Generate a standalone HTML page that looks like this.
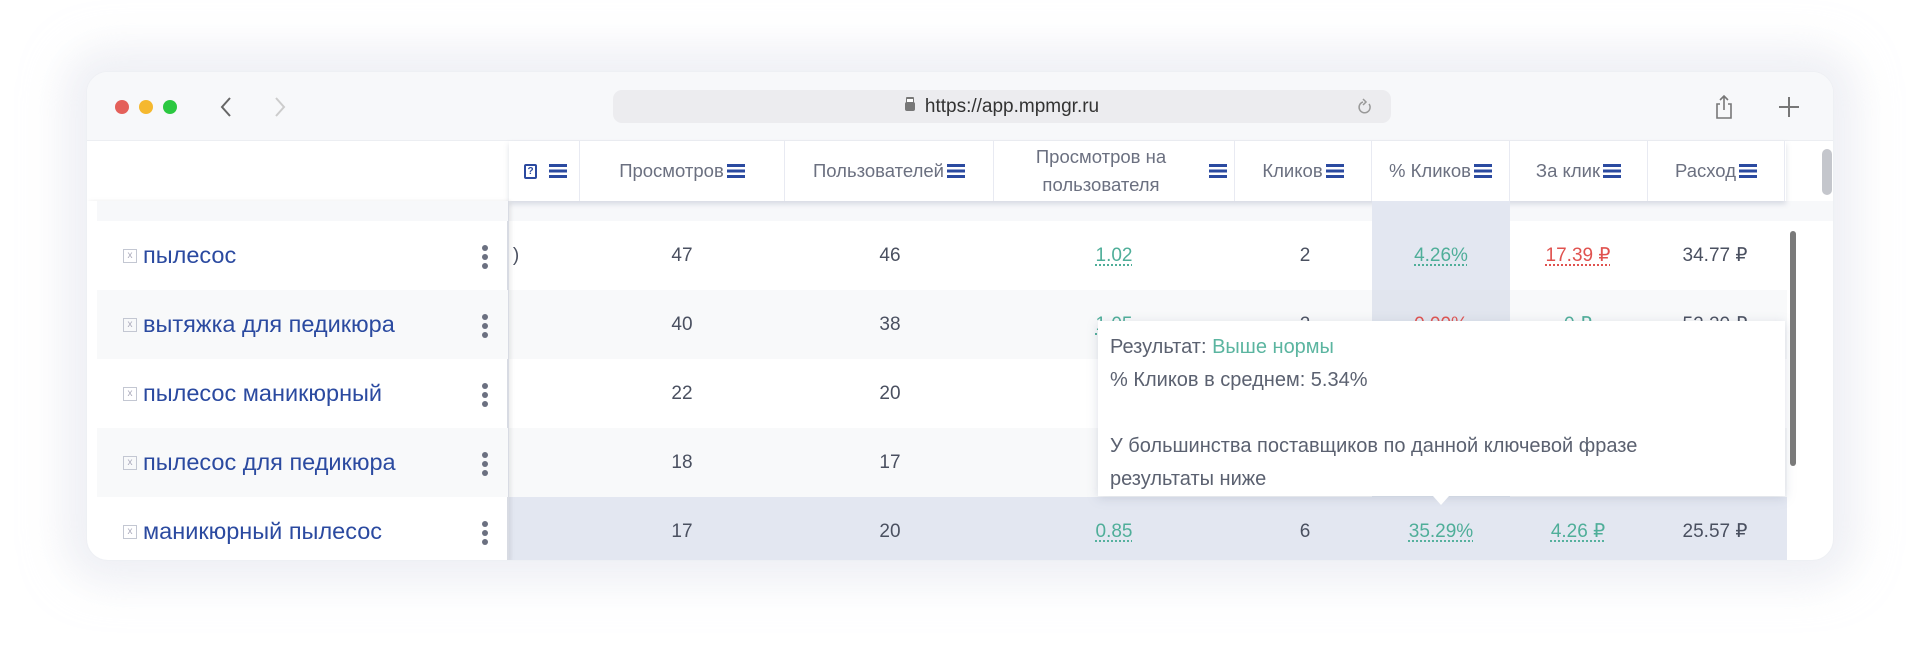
<!DOCTYPE html>
<html><head><meta charset="utf-8"><style>
*{margin:0;padding:0;box-sizing:border-box}
body{width:1920px;height:658px;background:#fff;position:relative;overflow:hidden;font-family:"Liberation Sans",sans-serif}
.abs{position:absolute}
.win{left:86px;top:71px;width:1748px;height:490px;border-radius:22px;background:#fff;overflow:hidden;box-shadow:0 0 40px 24px rgba(225,228,236,.55);border:1px solid #eef0f4}
.tb{left:0;top:0;width:1748px;height:69px;background:#f7f8fa;border-bottom:1px solid #eceef2}
.dot{width:14px;height:14px;border-radius:50%;top:28px}
.url{left:526px;top:18px;width:778px;height:33px;border-radius:9px;background:#ececef;font-size:19px;color:#333;text-align:center;line-height:33px}
.hd{top:69px;height:60px;background:#fff;border-right:1px solid #e8eaf2;color:#6b7080;font-size:18.5px;display:flex;align-items:center;justify-content:center;text-align:center;line-height:28px}
.m{display:inline-block;width:18px;height:14px;margin-left:3px;vertical-align:-1px;background:linear-gradient(#2b4aa0 0 3px,transparent 3px 5.5px,#2b4aa0 5.5px 8.5px,transparent 8.5px 11px,#2b4aa0 11px 14px)}
.row{left:0;width:1700px;height:69px}
.c{font-size:19px;color:#4a5060;text-align:center;position:absolute;width:160px;margin-left:-80px;line-height:69px}
.g{color:#4fae99;text-decoration:underline dotted #4fae99;text-underline-offset:4px}
.r{color:#e0524f;text-decoration:underline dotted #e0524f;text-underline-offset:4px}
.kw{left:0;width:411px;height:69px;font-size:23.5px;color:#2b4aa0;line-height:69px;padding-left:46px}
.xb{position:absolute;left:26px;top:28px;width:14px;height:14px;border:1px solid #c3c7d2;font-size:10px;color:#aab;line-height:12px;text-align:center}
.keb{position:absolute;left:385px;top:24px;width:6px}
.keb i{display:block;width:6px;height:6px;border-radius:50%;background:#6b7080;margin-bottom:3px}
</style></head><body>
<div class="abs win">
 <div class="abs tb">
  <div class="abs dot" style="left:28px;background:#e4605a"></div>
  <div class="abs dot" style="left:52px;background:#f5b82e"></div>
  <div class="abs dot" style="left:76px;background:#2bc840"></div>
  <svg class="abs" style="left:132px;top:24px" width="14" height="22"><path d="M11 2 L3 11 L11 20" fill="none" stroke="#666" stroke-width="2"/></svg>
  <svg class="abs" style="left:186px;top:24px" width="14" height="22"><path d="M3 2 L11 11 L3 20" fill="none" stroke="#ccc" stroke-width="2"/></svg>
  <div class="abs url"><span style="display:inline-block;width:10px;height:9px;background:#777;border-radius:2px;margin-right:10px;position:relative;top:-1px;box-shadow:0 -5px 0 -2px #fff,0 -6px 0 -1px #777"></span>https://app.mpmgr.ru</div>
  <svg class="abs" style="left:1270px;top:26px" width="16" height="18"><path d="M12 6 A5.5 5.5 0 1 1 6 4" fill="none" stroke="#999" stroke-width="1.5"/><path d="M6 1 L9 4 L6 7" fill="none" stroke="#999" stroke-width="1.5"/></svg>
  <svg class="abs" style="left:1627px;top:22px" width="20" height="26"><path d="M6 10 H3 V24 H17 V10 H14 M10 2 V16 M6 6 L10 2 L14 6" fill="none" stroke="#777" stroke-width="1.6"/></svg>
  <svg class="abs" style="left:1691px;top:24px" width="22" height="22"><path d="M11 1 V21 M1 11 H21" stroke="#777" stroke-width="2"/></svg>
 </div>
 <div class="abs" style="left:0;top:129px;width:1748px;height:20px;background:#f7f8fa"></div>
 <div class="abs" style="left:422px;top:69px;width:1277px;height:60px;box-shadow:0 3px 5px rgba(120,130,160,.25)"></div>
 <div class="abs hd" style="left:422px;width:71px;justify-content:flex-end;padding-right:12px"><span style="display:inline-block;width:13px;height:15px;border:2px solid #2b4aa0;border-radius:2px;font-size:10px;font-weight:bold;color:#2b4aa0;line-height:11px;margin-right:9px">?</span><span class="m"></span></div>
 <div class="abs hd" style="left:493px;width:205px">Просмотров<span class="m"></span></div>
 <div class="abs hd" style="left:698px;width:209px">Пользователей<span class="m"></span></div>
 <div class="abs hd" style="left:907px;width:241px"><span style="width:200px">Просмотров на пользователя</span><span class="m" style="margin-left:8px"></span></div>
 <div class="abs hd" style="left:1148px;width:137px">Кликов<span class="m"></span></div>
 <div class="abs hd" style="left:1285px;width:138px">% Кликов<span class="m"></span></div>
 <div class="abs hd" style="left:1423px;width:138px">За клик<span class="m"></span></div>
 <div class="abs hd" style="left:1561px;width:137px">Расход<span class="m"></span></div>
 <div class="abs" style="left:1285px;top:129px;width:138px;height:361px;background:#e3e7f1"></div>

 <div class="abs row" style="top:218px;background:#f8f9fa"></div>
 <div class="abs row" style="top:356px;background:#f8f9fa"></div>
 <div class="abs row" style="top:425px;background:#e3e7f1"></div>
 <div class="abs" style="left:1285px;top:218px;width:138px;height:69px;background:#e1e5ee"></div>
 <div class="abs" style="left:1285px;top:356px;width:138px;height:69px;background:#e1e5ee"></div>

 <div class="abs" style="top:149px;left:0;width:1700px;height:69px">
  <div class="c" style="left:424px;width:10px;margin:0">)</div>
  <div class="c" style="left:595px">47</div><div class="c" style="left:803px">46</div>
  <div class="c" style="left:1027px"><span class="g">1.02</span></div><div class="c" style="left:1218px">2</div>
  <div class="c" style="left:1354px"><span class="g">4.26%</span></div><div class="c" style="left:1491px"><span class="r">17.39 ₽</span></div>
  <div class="c" style="left:1628px">34.77 ₽</div></div>
 <div class="abs" style="top:218px;left:0;width:1700px;height:69px">
  <div class="c" style="left:595px">40</div><div class="c" style="left:803px">38</div>
  <div class="c" style="left:1027px"><span class="g">1.05</span></div><div class="c" style="left:1218px">2</div>
  <div class="c" style="left:1354px"><span class="r">0.00%</span></div><div class="c" style="left:1491px"><span class="g">0 ₽</span></div>
  <div class="c" style="left:1628px">52.20 ₽</div></div>
 <div class="abs" style="top:287px;left:0;width:1700px;height:69px">
  <div class="c" style="left:595px">22</div><div class="c" style="left:803px">20</div></div>
 <div class="abs" style="top:356px;left:0;width:1700px;height:69px">
  <div class="c" style="left:595px">18</div><div class="c" style="left:803px">17</div></div>
 <div class="abs" style="top:425px;left:0;width:1700px;height:69px">
  <div class="c" style="left:595px">17</div><div class="c" style="left:803px">20</div>
  <div class="c" style="left:1027px"><span class="g">0.85</span></div><div class="c" style="left:1218px">6</div>
  <div class="c" style="left:1354px"><span class="g">35.29%</span></div><div class="c" style="left:1491px"><span class="g">4.26 ₽</span></div>
  <div class="c" style="left:1628px">25.57 ₽</div></div>

 <div class="abs" style="left:0;top:129px;width:422px;height:361px;background:#fff;border-right:2px solid #d8dbe3;box-shadow:2px 0 4px rgba(0,0,0,.08)">
  <div class="abs" style="left:10px;top:0;width:411px;height:20px;background:#f7f8fa"></div>
  <div class="abs kw" style="left:10px;top:20px"><span class="xb">x</span>пылесос<span class="keb"><i></i><i></i><i></i></span></div>
  <div class="abs kw" style="left:10px;top:89px;background:#f8f9fa"><span class="xb">x</span>вытяжка для педикюра<span class="keb"><i></i><i></i><i></i></span></div>
  <div class="abs kw" style="left:10px;top:158px"><span class="xb">x</span>пылесос маникюрный<span class="keb"><i></i><i></i><i></i></span></div>
  <div class="abs kw" style="left:10px;top:227px;background:#f8f9fa"><span class="xb">x</span>пылесос для педикюра<span class="keb"><i></i><i></i><i></i></span></div>
  <div class="abs kw" style="left:10px;top:296px"><span class="xb">x</span>маникюрный пылесос<span class="keb"><i></i><i></i><i></i></span></div>
 </div>

 <div class="abs" style="left:1011px;top:249px;width:687px;height:175px;background:#fff;box-shadow:0 2px 10px rgba(120,130,160,.25);padding:10px 0 0 12px;font-size:20px;color:#5b6170;line-height:33px">
  Результат: <span style="color:#5bb5a0">Выше нормы</span><br>% Кликов в среднем: 5.34%<br><br>У большинства поставщиков по данной ключевой фразе<br>результаты ниже
 </div>
 <div class="abs" style="left:1346px;top:424px;width:0;height:0;border-left:8px solid transparent;border-right:8px solid transparent;border-top:9px solid #fff"></div>
 <div class="abs" style="left:1703px;top:159px;width:6px;height:235px;border-radius:3px;background:#7a7a7a"></div>
 <div class="abs" style="left:1735px;top:77px;width:10px;height:46px;border-radius:5px;background:#c4c6cc"></div>
</div>
</body></html>
